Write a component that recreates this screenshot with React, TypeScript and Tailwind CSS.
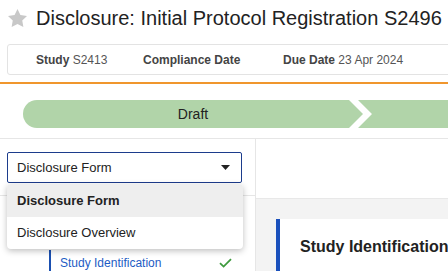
import React from "react";

export default function App() {
  return (
    <div
      className="relative w-[448px] h-[271px] overflow-hidden bg-white text-[#222]"
      style={{ fontFamily: '"Liberation Sans", Arial, sans-serif' }}
    >
      {/* Title */}
      <div className="flex items-center pt-[6px] pl-[8px] h-[30px]">
        <svg width="19" height="18" viewBox="1 0.8 22 21.1" preserveAspectRatio="none" className="shrink-0">
          <path
            d="M12 0.8l3.4 7 7.6 1.1-5.5 5.4 1.3 7.6L12 18.3l-6.8 3.6 1.3-7.6L1 8.9l7.6-1.1z"
            fill="#c8c8c8"
          />
        </svg>
        <div className="ml-[9px] text-[20px] leading-[24px] whitespace-nowrap text-[#222]">
          Disclosure: Initial Protocol Registration S2496
        </div>
      </div>

      {/* Info bar */}
      <div className="mt-[14px] ml-[7px] w-[460px] h-[31px] border border-[#e3e3e3] rounded-[3px] flex items-center pl-[28px] text-[12px] whitespace-nowrap">
        <div className="w-[107px]">
          <span className="font-bold text-[#444]">Study</span>{" "}
          <span className="text-[#555]">S2413</span>
        </div>
        <div className="w-[140px]">
          <span className="font-bold text-[#444]">Compliance Date</span>
        </div>
        <div>
          <span className="font-bold text-[#444]">Due Date</span>{" "}
          <span className="text-[#555]">23 Apr 2024</span>
        </div>
      </div>

      {/* Orange line */}
      <div className="mt-[7px] h-[2px] bg-[#f0962d]" />

      {/* Stage bar */}
      <div className="mt-[16px] pl-[23px] flex h-[28px]">
        <div className="w-[340px] shrink-0 h-full bg-[#b1d4a9] rounded-l-[14px] [clip-path:polygon(0_0,calc(100%-14px)_0,100%_50%,calc(100%-14px)_100%,0_100%)] flex items-center justify-center text-[14px] text-[#222]">
          Draft
        </div>
        <div className="ml-[-5px] w-[200px] shrink-0 h-full bg-[#b1d4a9] [clip-path:polygon(0_0,100%_0,100%_100%,0_100%,14px_50%)]" />
      </div>

      {/* Divider */}
      <div className="mt-[10px] h-px bg-[#e6e6e6]" />

      {/* Panels */}
      <div className="flex">
        {/* Left panel */}
        <div className="w-[256px] shrink-0 border-r border-[#e6e6e6] h-[140px]">
          <div className="pt-[13px] pb-[12px] pl-[7px] pr-[13px] border-b border-[#e6e6e6]">
            <div className="h-[31px] border border-[#1c3c8c] rounded-[2px] flex items-center justify-between pl-[9px] pr-[11px] text-[13px] text-[#222]">
              <span>Disclosure Form</span>
              <svg width="9" height="5" viewBox="0 0 9 5">
                <path d="M0 0H9L4.5 5Z" fill="#222" />
              </svg>
            </div>
          </div>
          <div className="pt-[54px]">
            <div className="ml-[49px] mr-[23px] h-[26px] border-l-2 border-[#1a4fb0] pl-[9px] flex items-center justify-between">
              <span className="text-[12px] text-[#1d5cc4]">Study Identification</span>
              <svg width="13" height="10" viewBox="0 0 13 10">
                <path d="M1 5.2l3.6 3.4L12 1.2" fill="none" stroke="#3e9a3e" strokeWidth="1.8" />
              </svg>
            </div>
          </div>
        </div>

        {/* Right panel */}
        <div className="flex-1">
          <div className="h-[60px] border-b border-[#e8e8e8] bg-white" />
          <div className="bg-[#f3f3f3] pt-[20px] pl-[20px] h-[100px]">
            <div className="border-l-4 border-[#1a50bc] bg-white h-[80px] pl-[20px] pt-[18px]">
              <div className="text-[16px] leading-[20px] font-bold text-[#222] whitespace-nowrap">
                Study Identification
              </div>
            </div>
          </div>
        </div>
      </div>

      {/* Dropdown menu */}
      <div className="absolute left-[7px] top-[184px] w-[236px] bg-white rounded-[4px] shadow-[0_2px_6px_rgba(0,0,0,0.25)] overflow-hidden text-[13px] text-[#222]">
        <div className="h-[33px] bg-[#eeeeee] flex items-center pl-[10px] font-bold">
          Disclosure Form
        </div>
        <div className="h-[32px] flex items-center pl-[10px]">Disclosure Overview</div>
      </div>
    </div>
  );
}
